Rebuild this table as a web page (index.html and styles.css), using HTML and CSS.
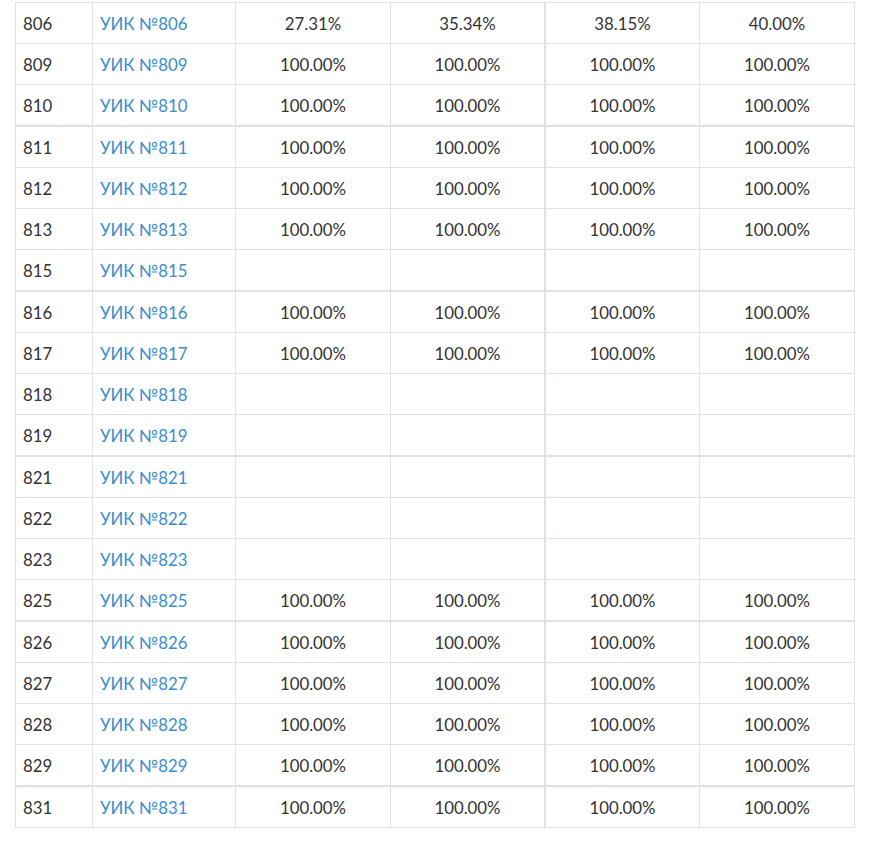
FILE: index.html
```html
<!DOCTYPE html>
<html lang="ru">
<head>
<meta charset="utf-8">
<title>УИК</title>
<link rel="stylesheet" href="styles.css">
</head>
<body>
<div class="page">
<table class="uik">
<tbody>
<tr><td class="c1">806</td><td class="c2"><a href="#">УИК №806</a></td><td class="c3">27.31%</td><td class="c4">35.34%</td><td class="c5">38.15%</td><td class="c6">40.00%</td></tr>
<tr><td class="c1">809</td><td class="c2"><a href="#">УИК №809</a></td><td class="c3">100.00%</td><td class="c4">100.00%</td><td class="c5">100.00%</td><td class="c6">100.00%</td></tr>
<tr class="last"><td class="c1">810</td><td class="c2"><a href="#">УИК №810</a></td><td class="c3">100.00%</td><td class="c4">100.00%</td><td class="c5">100.00%</td><td class="c6">100.00%</td></tr>
<tr><td class="c1">811</td><td class="c2"><a href="#">УИК №811</a></td><td class="c3">100.00%</td><td class="c4">100.00%</td><td class="c5">100.00%</td><td class="c6">100.00%</td></tr>
<tr><td class="c1">812</td><td class="c2"><a href="#">УИК №812</a></td><td class="c3">100.00%</td><td class="c4">100.00%</td><td class="c5">100.00%</td><td class="c6">100.00%</td></tr>
<tr><td class="c1">813</td><td class="c2"><a href="#">УИК №813</a></td><td class="c3">100.00%</td><td class="c4">100.00%</td><td class="c5">100.00%</td><td class="c6">100.00%</td></tr>
<tr class="last"><td class="c1">815</td><td class="c2"><a href="#">УИК №815</a></td><td class="c3"></td><td class="c4"></td><td class="c5"></td><td class="c6"></td></tr>
<tr><td class="c1">816</td><td class="c2"><a href="#">УИК №816</a></td><td class="c3">100.00%</td><td class="c4">100.00%</td><td class="c5">100.00%</td><td class="c6">100.00%</td></tr>
<tr><td class="c1">817</td><td class="c2"><a href="#">УИК №817</a></td><td class="c3">100.00%</td><td class="c4">100.00%</td><td class="c5">100.00%</td><td class="c6">100.00%</td></tr>
<tr><td class="c1">818</td><td class="c2"><a href="#">УИК №818</a></td><td class="c3"></td><td class="c4"></td><td class="c5"></td><td class="c6"></td></tr>
<tr class="last"><td class="c1">819</td><td class="c2"><a href="#">УИК №819</a></td><td class="c3"></td><td class="c4"></td><td class="c5"></td><td class="c6"></td></tr>
<tr><td class="c1">821</td><td class="c2"><a href="#">УИК №821</a></td><td class="c3"></td><td class="c4"></td><td class="c5"></td><td class="c6"></td></tr>
<tr><td class="c1">822</td><td class="c2"><a href="#">УИК №822</a></td><td class="c3"></td><td class="c4"></td><td class="c5"></td><td class="c6"></td></tr>
<tr><td class="c1">823</td><td class="c2"><a href="#">УИК №823</a></td><td class="c3"></td><td class="c4"></td><td class="c5"></td><td class="c6"></td></tr>
<tr class="last"><td class="c1">825</td><td class="c2"><a href="#">УИК №825</a></td><td class="c3">100.00%</td><td class="c4">100.00%</td><td class="c5">100.00%</td><td class="c6">100.00%</td></tr>
<tr><td class="c1">826</td><td class="c2"><a href="#">УИК №826</a></td><td class="c3">100.00%</td><td class="c4">100.00%</td><td class="c5">100.00%</td><td class="c6">100.00%</td></tr>
<tr><td class="c1">827</td><td class="c2"><a href="#">УИК №827</a></td><td class="c3">100.00%</td><td class="c4">100.00%</td><td class="c5">100.00%</td><td class="c6">100.00%</td></tr>
<tr><td class="c1">828</td><td class="c2"><a href="#">УИК №828</a></td><td class="c3">100.00%</td><td class="c4">100.00%</td><td class="c5">100.00%</td><td class="c6">100.00%</td></tr>
<tr class="last"><td class="c1">829</td><td class="c2"><a href="#">УИК №829</a></td><td class="c3">100.00%</td><td class="c4">100.00%</td><td class="c5">100.00%</td><td class="c6">100.00%</td></tr>
<tr><td class="c1">831</td><td class="c2"><a href="#">УИК №831</a></td><td class="c3">100.00%</td><td class="c4">100.00%</td><td class="c5">100.00%</td><td class="c6">100.00%</td></tr>
</tbody>
</table>
</div>
</body>
</html>
```

FILE: styles.css
```css
html, body {
  margin: 0;
  padding: 0;
  background: #ffffff;
}

.page {
  padding: 2px 0 0 15px;
  font-family: Lato, "Open Sans", sans-serif;
  font-size: 16.8px;
  color: #333333;
}

.uik {
  width: 840px;
  table-layout: fixed;
  border-collapse: separate;
  border-spacing: 0;
  border-top: 1px solid #dfe2e7;
  border-left: 1px solid #dfe2e7;
}

.uik td {
  box-sizing: border-box;
  height: 41px;
  padding: 9px 7px 7px;
  line-height: 24px;
  border-right: 1px solid #dfe2e7;
  border-bottom: 1px solid #dfe2e7;
  text-align: center;
  white-space: nowrap;
  vertical-align: middle;
}

.uik tr.last td {
  height: 42px;
  border-bottom-width: 2px;
}

.uik td.c1 { width: 77px; text-align: left; }
.uik td.c2 { width: 143px; text-align: left; }
.uik td.c3 { width: 155px; }
.uik td.c4 { width: 155px; border-right-width: 2px; }
.uik td.c5 { width: 154px; }
.uik td.c6 { width: 155px; }

.uik a {
  color: #3b8dcf;
  text-decoration: none;
}
```
